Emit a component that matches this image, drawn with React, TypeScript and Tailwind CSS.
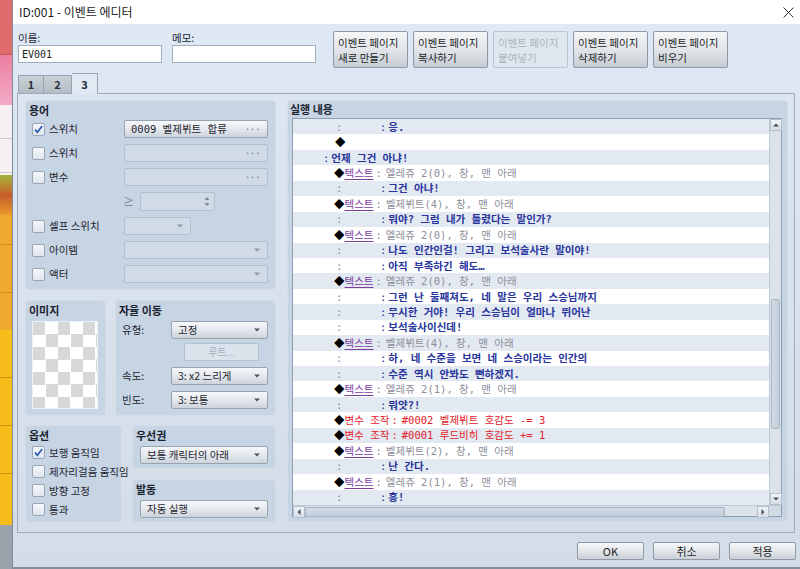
import React from "react"
import clsx from "clsx"

const KR = "font-['Noto_Sans_CJK_KR','Noto_Sans',sans-serif]"
const MONO = "font-['DejaVu_Sans_Mono','Noto_Sans_CJK_KR',monospace]"

type Row = { k: "c" | "d" | "ch" | "t" | "v"; t?: string }

const rows: Row[] = [
  { k: "c", t: "응." },
  { k: "d" },
  { k: "ch", t: "언제 그건 아냐!" },
  { k: "t", t: "엘레쥬 2(0), 창, 맨 아래" },
  { k: "c", t: "그건 아냐!" },
  { k: "t", t: "벨제뷔트(4), 창, 맨 아래" },
  { k: "c", t: "뭐야? 그럼 내가 틀렸다는 말인가?" },
  { k: "t", t: "엘레쥬 2(0), 창, 맨 아래" },
  { k: "c", t: "나도 인간인걸! 그리고 보석술사란 말이야!" },
  { k: "c", t: "아직 부족하긴 해도…" },
  { k: "t", t: "엘레쥬 2(0), 창, 맨 아래" },
  { k: "c", t: "그런 난 둘째쳐도, 네 말은 우리 스승님까지" },
  { k: "c", t: "무시한 거야! 우리 스승님이 얼마나 뛰어난" },
  { k: "c", t: "보석술사이신데!" },
  { k: "t", t: "벨제뷔트(4), 창, 맨 아래" },
  { k: "c", t: "하, 네 수준을 보면 네 스승이라는 인간의" },
  { k: "c", t: "수준 역시 안봐도 뻔하겠지." },
  { k: "t", t: "엘레쥬 2(1), 창, 맨 아래" },
  { k: "c", t: "뭐얏?!" },
  { k: "v", t: "#0002 벨제뷔트 호감도 -= 3" },
  { k: "v", t: "#0001 루드비히 호감도 += 1" },
  { k: "t", t: "벨제뷔트(2), 창, 맨 아래" },
  { k: "c", t: "난 간다." },
  { k: "t", t: "엘레쥬 2(1), 창, 맨 아래" },
  { k: "c", t: "흥!" },
]

const DownArrow = ({ className }: { className?: string }) => (
  <svg width="6" height="4" viewBox="0 0 6 4" className={className}>
    <path d="M0 0.5 H6 L3 3.5 Z" fill="currentColor" />
  </svg>
)

const Check = ({ checked }: { checked?: boolean }) => (
  <div className="w-[13px] h-[13px] shrink-0 rounded-[2px] border border-[#97a5b6] bg-linear-to-b from-[#f6f8fb] to-[#e0e6ee] flex items-center justify-center">
    {checked && (
      <svg width="11" height="11" viewBox="0 0 11 11">
        <path d="M2 5.5 L4.3 8.3 L9.2 2" fill="none" stroke="#2b5fb4" strokeWidth="1.8" />
      </svg>
    )}
  </div>
)

const Combo = ({
  text,
  w,
  disabled,
  dots,
  mono,
}: {
  text?: string
  w: string
  disabled?: boolean
  dots?: boolean
  mono?: boolean
}) => (
  <div
    className={clsx(
      "h-[18px] shrink-0 rounded-[2px] border flex items-center pl-[6px] pr-[7px] text-[10.5px] leading-[14px]",
      w,
      disabled
        ? "bg-[#d1dbe7] border-[#b2bfcf] text-[#8794a4]"
        : "bg-linear-to-b from-[#f7f8fa] via-[#e5e9ee] to-[#ccd3db] border-[#97a3b1] text-[#1f2630]"
    )}
  >
    <span className={clsx("flex-1 whitespace-nowrap", mono && MONO)}>{text}</span>
    {dots ? (
      <span className="text-[10px] text-[#6a7684] tracking-[-0.5px]">···</span>
    ) : (
      <DownArrow className={disabled ? "text-[#8a97a6]" : "text-[#4a5460]"} />
    )}
  </div>
)

const GroupTitle = ({ children }: { children: React.ReactNode }) => (
  <div className="h-[19px] pl-[3px] pt-[2px] text-[11px] font-bold leading-[14px] text-[#1c2430]">{children}</div>
)

const Label = ({ children, className }: { children: React.ReactNode; className?: string }) => (
  <span className={clsx("text-[10.5px] leading-[14px] text-[#1f2630] whitespace-nowrap", className)}>{children}</span>
)

const CheckRow = ({ label, checked }: { label: string; checked?: boolean }) => (
  <div className="w-[92px] shrink-0 flex items-center gap-[4px]">
    <Check checked={checked} />
    <Label>{label}</Label>
  </div>
)

const Strip = () => (
  <div className="w-[12px] shrink-0 flex flex-col">
    <div className="h-[55px] bg-[#e06b6c] border-b border-[#c65a5c]" />
    <div className="h-[50px] bg-linear-to-b from-[#ea7fa0] to-[#f4abc8]" />
    <div className="h-[70px] bg-[#f7f0f3] flex flex-col">
      <div className="h-[34px] border-b border-[#cfc5ca]" />
      <div className="h-[34px] border-b border-[#cfc5ca]" />
    </div>
    <div className="h-[40px] bg-linear-to-b from-[#9bb43c] via-[#c65a2a] to-[#e99a2c]" />
    <div className="h-[115px] bg-[#f0a82e] flex flex-col">
      <div className="h-[30px] border-b border-[#d08a20]" />
      <div className="h-[48px] border-b border-[#d08a20]" />
    </div>
    <div className="h-[195px] bg-[#f6bc1a] flex flex-col">
      <div className="h-[48px] border-b border-[#c99612]" />
      <div className="h-[48px] border-b border-[#c99612]" />
      <div className="h-[48px] border-b border-[#c99612]" />
    </div>
    <div className="flex-1 bg-[#9aa2ab]" />
  </div>
)

const TopButton = ({ l1, l2, disabled }: { l1: string; l2: string; disabled?: boolean }) => (
  <div
    className={clsx(
      "w-[75px] h-[37px] shrink-0 rounded-[2px] border pl-[4px] pt-[3px] text-[10.5px] leading-[15px]",
      disabled
        ? "bg-[#dfe6ee] border-[#b9c5d2] text-[#aab4c0]"
        : "bg-linear-to-b from-[#f5f6f7] via-[#e2e5e9] to-[#c7cdd4] border-[#8d99a6] text-[#1a1f26]"
    )}
  >
    <div>{l1}</div>
    <div>{l2}</div>
  </div>
)

const BottomButton = ({ children }: { children: React.ReactNode }) => (
  <div className="w-[67px] h-[18px] rounded-[2px] border border-[#8d99a6] bg-linear-to-b from-[#f6f7f8] via-[#e4e7ea] to-[#cbd0d6] flex items-center justify-center text-[11px] leading-[14px] text-[#1a1f26]">
    {children}
  </div>
)

const ListRow = ({ r, i }: { r: Row; i: number }) => (
  <div
    className={clsx(
      "h-[15.44px] flex items-center whitespace-nowrap text-[10.5px] leading-[14px]",
      MONO,
      i % 2 === 0 ? "bg-[#e3e9f1]" : "bg-white"
    )}
  >
    {r.k === "c" && (
      <>
        <span className="w-[87px] shrink-0 pl-[43px] text-[#7d8894]">:</span>
        <span className="text-[#27359c]">
          :<span className="ml-[2px] font-bold">{r.t}</span>
        </span>
      </>
    )}
    {r.k === "d" && <span className={clsx("pl-[42px] text-black", KR)}>◆</span>}
    {r.k === "ch" && (
      <span className="pl-[30px] text-[#27359c]">
        :<span className="ml-[2px] font-bold">{r.t}</span>
      </span>
    )}
    {r.k === "t" && (
      <span className="pl-[41px] flex items-center">
        <span className={clsx("text-black", KR)}>◆</span>
        <span className={clsx("text-[#7a3c9e] underline underline-offset-2", KR)}>텍스트</span>
        <span className="ml-[2px] text-[#8a8a96]">:</span>
        <span className="ml-[4px] text-[#8e8e9a]">{r.t}</span>
      </span>
    )}
    {r.k === "v" && (
      <span className="pl-[41px] flex items-center text-[#e2222c]">
        <span className={clsx("text-black", KR)}>◆</span>
        <span>변수 조작</span>
        <span className="ml-[2px]">:</span>
        <span className="ml-[4px]">{r.t}</span>
      </span>
    )}
  </div>
)

const ScrollBtn = ({ dir }: { dir: "up" | "down" | "left" | "right" }) => (
  <div className="w-[12px] h-[12px] shrink-0 border border-[#b3bfcc] bg-linear-to-b from-[#f2f5f8] to-[#d6dde6] flex items-center justify-center">
    <svg width="6" height="6" viewBox="0 0 6 6">
      {dir === "up" && <path d="M0 4.5 H6 L3 1.5 Z" fill="#46505c" />}
      {dir === "down" && <path d="M0 1.5 H6 L3 4.5 Z" fill="#46505c" />}
      {dir === "left" && <path d="M4.5 0 V6 L1.5 3 Z" fill="#46505c" />}
      {dir === "right" && <path d="M1.5 0 V6 L4.5 3 Z" fill="#46505c" />}
    </svg>
  </div>
)

export default function App() {
  return (
    <div className={clsx("w-[800px] h-[569px] flex overflow-hidden bg-[#d5dde7]", KR)}>
      <Strip />
      <div className="flex-1 flex flex-col border-l border-[#7f8b98] border-b-[2px] border-b-[#858e98]">
        {/* title bar */}
        <div className="h-[24px] shrink-0 bg-white flex items-center pl-[6px] pr-[6px]">
          <span className="flex-1 text-[12px] text-[#1b1b1b]">ID:001 - 이벤트 에디터</span>
          <svg width="11" height="11" viewBox="0 0 11 11">
            <path d="M0.5 0.5 L10.5 10.5 M10.5 0.5 L0.5 10.5" stroke="#333" strokeWidth="1" />
          </svg>
        </div>

        <div className="flex-1 flex flex-col bg-linear-to-b from-[#dfe9f6] to-[#d3dce7] pl-[5px] pr-[5px]">
          {/* name, memo, page buttons */}
          <div className="flex pt-[7px] h-[44px] shrink-0">
            <div className="w-[144px] flex flex-col">
              <Label className="h-[14px] leading-[12px]">이름:</Label>
              <div className={clsx("h-[18px] bg-white border border-[#a3afbc] pl-[3px] flex items-center text-[10px] text-[#1b1b1b]", MONO)}>
                EV001
              </div>
            </div>
            <div className="w-[144px] ml-[10px] flex flex-col">
              <Label className="h-[14px] leading-[12px]">메모:</Label>
              <div className="h-[18px] bg-white border border-[#a3afbc]" />
            </div>
            <div className="ml-[17px] flex gap-[5px]">
              <TopButton l1="이벤트 페이지" l2="새로 만들기" />
              <TopButton l1="이벤트 페이지" l2="복사하기" />
              <TopButton l1="이벤트 페이지" l2="붙여넣기" disabled />
              <TopButton l1="이벤트 페이지" l2="삭제하기" />
              <TopButton l1="이벤트 페이지" l2="비우기" />
            </div>
          </div>

          {/* tabs */}
          <div className="h-[20px] mt-[5px] shrink-0 flex items-end">
            <div className="w-[26px] h-[18px] border border-b-0 border-[#97a3b0] bg-linear-to-b from-[#cbd1d7] to-[#b3bbc4] flex items-center justify-center text-[11px] font-bold text-[#26303a]">
              1
            </div>
            <div className="w-[28px] h-[18px] border border-b-0 border-l-0 border-[#97a3b0] bg-linear-to-b from-[#cbd1d7] to-[#b3bbc4] flex items-center justify-center text-[11px] font-bold text-[#26303a]">
              2
            </div>
            <div className="w-[26px] h-[21px] -mb-px relative z-10 border border-b-0 border-l-0 border-[#97a3b0] bg-[#e2e9f2] flex items-center justify-center text-[11px] font-bold text-[#26303a]">
              3
            </div>
          </div>

          {/* tab panel */}
          <div className="h-[440px] shrink-0 -ml-px border border-[#9dabbb] bg-linear-to-b from-[#dce5f0] to-[#d4dde8] pt-[6px] pl-[7px] pr-[6px] flex gap-[11px]">
            {/* left column */}
            <div className="w-[251px] shrink-0 flex flex-col">
              {/* 용어 */}
              <div className="h-[190px] rounded-[4px] border border-[#d4deea] bg-[#c6d4e4] flex flex-col">
                <GroupTitle>용어</GroupTitle>
                <div className="flex flex-col gap-[6px] pl-[6px]">
                  <div className="h-[18px] flex items-center">
                    <CheckRow label="스위치" checked />
                    <Combo w="w-[144px]" text="0009 벨제뷔트 합류" dots mono />
                  </div>
                  <div className="h-[18px] flex items-center">
                    <CheckRow label="스위치" />
                    <Combo w="w-[144px]" disabled dots />
                  </div>
                  <div className="h-[18px] flex items-center">
                    <CheckRow label="변수" />
                    <Combo w="w-[144px]" disabled dots />
                  </div>
                  <div className="h-[19px] flex items-center">
                    <div className="w-[91px] shrink-0" />
                    <span className="w-[17px] text-[11px] text-[#7e8a98]">≥</span>
                    <div className="w-[75px] h-[19px] rounded-[2px] border border-[#b2bfcf] bg-[#d1dbe7] flex items-center justify-end pr-[4px]">
                      <svg width="6" height="11" viewBox="0 0 6 11">
                        <path d="M0.5 4 H5.5 L3 1 Z M0.5 7 H5.5 L3 10 Z" fill="#7d8a9a" />
                      </svg>
                    </div>
                  </div>
                  <div className="h-[18px] flex items-center">
                    <CheckRow label="셀프 스위치" />
                    <Combo w="w-[67px]" disabled />
                  </div>
                  <div className="h-[18px] flex items-center">
                    <CheckRow label="아이템" />
                    <Combo w="w-[144px]" disabled />
                  </div>
                  <div className="h-[18px] flex items-center">
                    <CheckRow label="액터" />
                    <Combo w="w-[144px]" disabled />
                  </div>
                </div>
              </div>

              {/* 이미지 / 자율 이동 */}
              <div className="h-[116px] mt-[10px] flex gap-[9px]">
                <div className="w-[81px] rounded-[4px] border border-[#d4deea] bg-[#c6d4e4] flex flex-col">
                  <GroupTitle>이미지</GroupTitle>
                  <div className="ml-[6px] mt-px w-[66px] h-[88px] border border-[#eef2f7] bg-[conic-gradient(white_25%,#d8d8d8_0_50%,white_0_75%,#d8d8d8_0)] bg-[length:25px_25px]" />
                </div>
                <div className="w-[161px] rounded-[4px] border border-[#d4deea] bg-[#c6d4e4] flex flex-col">
                  <GroupTitle>자율 이동</GroupTitle>
                  <div className="flex flex-col pl-[6px] pt-px">
                    <div className="h-[18px] flex items-center">
                      <Label className="w-[49px]">유형:</Label>
                      <Combo w="w-[97px]" text="고정" />
                    </div>
                    <div className="h-[18px] mt-[4px] ml-[62px] w-[75px] rounded-[2px] border border-[#b3c0ce] bg-[#dbe3ec] flex items-center justify-center text-[10px] leading-[14px] text-[#a4afbc]">
                      루트...
                    </div>
                    <div className="h-[18px] mt-[6px] flex items-center">
                      <Label className="w-[49px]">속도:</Label>
                      <Combo w="w-[97px]" text="3: x2 느리게" />
                    </div>
                    <div className="h-[18px] mt-[6px] flex items-center">
                      <Label className="w-[49px]">빈도:</Label>
                      <Combo w="w-[97px]" text="3: 보통" />
                    </div>
                  </div>
                </div>
              </div>

              {/* 옵션 / 우선권 / 발동 */}
              <div className="h-[98px] mt-[9px] flex gap-[10px]">
                <div className="w-[97px] rounded-[4px] border border-[#d4deea] bg-[#c6d4e4] flex flex-col">
                  <GroupTitle>옵션</GroupTitle>
                  <div className="flex flex-col gap-[6px] pl-[6px] pt-px">
                    {[
                      ["보행 움직임", true],
                      ["제자리걸음 움직임", false],
                      ["방향 고정", false],
                      ["통과", false],
                    ].map(([l, c]) => (
                      <div key={l as string} className="h-[13px] flex items-center gap-[4px]">
                        <Check checked={c as boolean} />
                        <Label>{l as string}</Label>
                      </div>
                    ))}
                  </div>
                </div>
                <div className="w-[144px] flex flex-col gap-[10px]">
                  <div className="h-[44px] rounded-[4px] border border-[#d4deea] bg-[#c6d4e4] flex flex-col">
                    <GroupTitle>우선권</GroupTitle>
                    <div className="pl-[7px] pt-px">
                      <Combo w="w-[128px]" text="보통 캐릭터의 아래" />
                    </div>
                  </div>
                  <div className="h-[44px] rounded-[4px] border border-[#d4deea] bg-[#c6d4e4] flex flex-col">
                    <GroupTitle>발동</GroupTitle>
                    <div className="pl-[7px] pt-px">
                      <Combo w="w-[128px]" text="자동 실행" />
                    </div>
                  </div>
                </div>
              </div>
            </div>

            {/* 실행 내용 */}
            <div className="w-[501px] h-[422px] shrink-0 rounded-[4px] border border-[#d4deea] bg-[#c6d4e4] flex flex-col">
              <div className="h-[17px] pl-[2px] pt-[1px] text-[11px] font-bold leading-[14px] text-[#1c2430]">실행 내용</div>
              <div className="ml-[4px] w-[490px] h-[399px] border border-[#8e9eb2] flex flex-col bg-white">
                <div className="flex h-[386px]">
                  <div className="flex-1 flex flex-col overflow-hidden">
                    {rows.map((r, i) => (
                      <ListRow key={i} r={r} i={i} />
                    ))}
                  </div>
                  <div className="w-[12px] flex flex-col bg-[#dbe2ea] border-l border-[#c0cad6]">
                    <ScrollBtn dir="up" />
                    <div className="h-[168px]" />
                    <div className="h-[130px] mx-px rounded-[2px] border border-[#a9b5c4] bg-linear-to-r from-[#d3dbe5] to-[#c3cdd9]" />
                    <div className="flex-1" />
                    <ScrollBtn dir="down" />
                  </div>
                </div>
                <div className="h-[11px] flex bg-[#dbe2ea] border-t border-[#c0cad6]">
                  <div className="w-[12px] h-[11px] flex">
                    <ScrollBtn dir="left" />
                  </div>
                  <div className="w-[420px] h-[10px] mt-px rounded-[2px] border border-[#a9b5c4] bg-linear-to-b from-[#d3dbe5] to-[#c3cdd9]" />
                  <div className="flex-1" />
                  <div className="w-[12px] h-[11px] flex">
                    <ScrollBtn dir="right" />
                  </div>
                  <div className="w-[12px] bg-[#d2dae4]" />
                </div>
              </div>
            </div>
          </div>

          {/* OK / cancel / apply */}
          <div className="mt-[9px] -mr-px flex justify-end gap-[9px]">
            <BottomButton>OK</BottomButton>
            <BottomButton>취소</BottomButton>
            <BottomButton>적용</BottomButton>
          </div>
        </div>
      </div>
    </div>
  )
}
